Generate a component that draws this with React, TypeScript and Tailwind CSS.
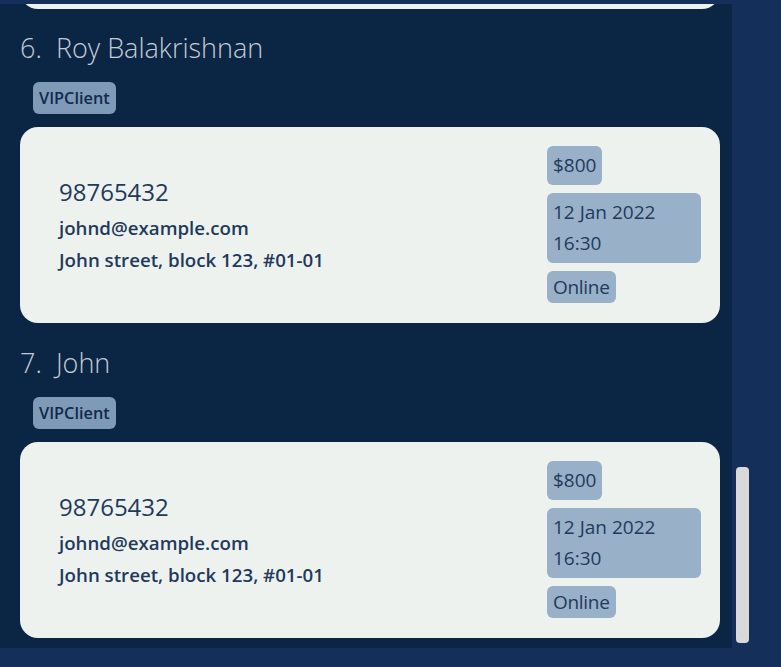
import React from "react";

type Person = { idx: number; name: string };

const font = { fontFamily: '"Open Sans", "Noto Sans", sans-serif' };

function Card() {
  return (
    <div className="flex items-center justify-between rounded-[18px] bg-[#eef2ee] h-[196px] pl-[39px] pr-[19px]">
      <div className="flex flex-col text-[#1f3a5c] mb-[2px]">
        <div className="text-[24px] leading-[32px]">98765432</div>
        <div className="text-[18.7px] font-semibold leading-[40px]">johnd@example.com</div>
        <div className="text-[18.7px] font-semibold leading-[24px]">John street, block 123, #01-01</div>
      </div>
      <div className="flex flex-col items-start gap-[8px] w-[154px] text-[#1f3a5c] text-[19px] mb-[1px]">
        <div className="rounded-[6px] bg-[#98b1c9] px-[6px] py-[4px] leading-[31px]">$800</div>
        <div className="rounded-[6px] bg-[#98b1c9] px-[6px] py-[4px] leading-[31px] w-full">
          12 Jan 2022
          <br />
          16:30
        </div>
        <div className="rounded-[6px] bg-[#98b1c9] px-[6px] py-[1px] leading-[30px] tracking-[-0.3px]">Online</div>
      </div>
    </div>
  );
}

function Item({ p }: { p: Person }) {
  return (
    <div className="flex flex-col">
      <div className="whitespace-pre text-[27px] font-light leading-[36px] text-[#c5cbd3] pl-[20px]">
        {p.idx}.  {p.name}
      </div>
      <div className="pl-[33px] mt-[16px]">
        <span className="inline-block rounded-[6px] bg-[#7f9ab6] px-[6px] text-[16.3px] font-semibold leading-[32px] text-[#0f2a4d]">
          VIPClient
        </span>
      </div>
      <div className="mt-[13px] pl-[20px] pr-[12px]">
        <Card />
      </div>
    </div>
  );
}

export default function App() {
  const people: Person[] = [
    { idx: 6, name: "Roy Balakrishnan" },
    { idx: 7, name: "John" },
  ];
  return (
    <div className="w-[781px] h-[667px] bg-[#142f5a] overflow-hidden flex" style={font}>
      <div className="mt-[4px] w-[732px] h-[644px] bg-[#0b2545] overflow-hidden">
        <div className="mt-[-191px] pl-[20px] pr-[12px]">
          <div className="rounded-[18px] bg-[#eef2ee] h-[196px]" />
        </div>
        <div className="flex flex-col gap-[22px] pt-[21px]">
          {people.map((p) => (
            <Item key={p.idx} p={p} />
          ))}
        </div>
      </div>
      <div className="flex-1">
        <div className="ml-[4px] mt-[467px] w-[13px] h-[176px] rounded-[4px] bg-[#d9d9d9]" />
      </div>
    </div>
  );
}
